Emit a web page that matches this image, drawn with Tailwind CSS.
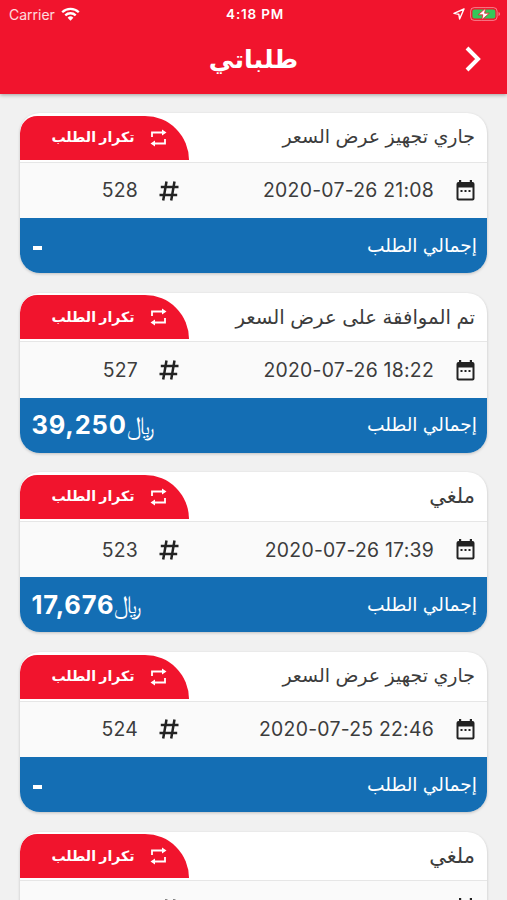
<!DOCTYPE html>
<html lang="ar" dir="rtl">

<head>
  <meta charset="UTF-8" />
  <meta name="viewport" content="width=device-width, initial-scale=1.0" />
  <title>طلباتي</title>
  <script src="https://cdn.jsdelivr.net/npm/@tailwindcss/browser@4"></script>
</head>

<body class="h-screen overflow-hidden bg-[#f1f1f1] font-['Inter','DejaVu_Sans',sans-serif] text-[#3c3c3c]">

  <!-- HEADER -->
  <header class="relative h-[94px] bg-[#f1142d] text-white shadow-[0_1px_4px_rgba(0,0,0,0.35)]">
    <div dir="ltr" class="grid h-7 grid-cols-3 items-center pl-[9px] pr-[6px] text-[13.5px]">
      <div class="flex items-center gap-[6px]">
        <span class="text-[14px] text-white/85">Carrier</span>
        <svg class="h-[14px] w-[19px]" viewBox="0 0 19 14" fill="none" stroke="currentColor" stroke-width="2.3">
          <path d="M1.2 5.2a11.8 11.8 0 0 1 16.6 0" />
          <path d="M4.3 8.4a7.4 7.4 0 0 1 10.4 0" />
          <path d="M6.6 10.8a4.1 4.1 0 0 1 5.8 0L9.5 13.7z" fill="currentColor" stroke="none" />
        </svg>
      </div>
      <span class="text-center font-semibold tracking-[0.8px] whitespace-nowrap">4:18 PM</span>
      <div class="flex items-center justify-end gap-[5px]">
        <svg class="h-3 w-3" viewBox="0 0 12 12" fill="none" stroke="currentColor" stroke-width="1.4" stroke-linejoin="round">
          <path d="M11 1L1 5.4l4.8.8.8 4.8z" />
        </svg>
        <svg class="h-[14px] w-[31px]" viewBox="0 0 31 14">
          <rect x=".6" y=".6" width="26.5" height="12.8" rx="3.6" fill="none" stroke="#fff" stroke-opacity=".45" />
          <rect x="2.4" y="2.4" width="23" height="9.2" rx="2" fill="#35c759" />
          <path d="M28.5 5v4q1.6-.6 1.6-2T28.5 5z" fill="#fff" fill-opacity=".45" />
          <path d="M15.6 1.2L8.2 7.8h4.6l-1 5 7.5-6.6h-4.7z" fill="#fff" stroke="#f1142d" stroke-width=".8" />
        </svg>
      </div>
    </div>
    <div class="grid h-[62px] grid-cols-[1fr_auto_1fr] items-center px-[25px]">
      <svg class="h-[26px] w-[18px]" viewBox="0 0 18 26" fill="none" stroke="currentColor" stroke-width="4">
        <path d="M3 2l11 11L3 24" />
      </svg>
      <h1 class="text-[25.4px] font-bold">طلباتي</h1>
    </div>
  </header>

  <!-- ORDERS LIST -->
  <main id="orders" class="flex flex-col gap-[19.6px] px-5 pt-[19.3px]"></main>

  <script>
    const orders = [
      { status: "جاري تجهيز عرض السعر", size: "text-[19px]", date: "2020-07-26 21:08", number: "528", total: null },
      { status: "تم الموافقة على عرض السعر", size: "text-[19.7px]", date: "2020-07-26 18:22", number: "527", total: "39,250" },
      { status: "ملغي", size: "text-[21px]", date: "2020-07-26 17:39", number: "523", total: "17,676" },
      { status: "جاري تجهيز عرض السعر", size: "text-[19px]", date: "2020-07-25 22:46", number: "524", total: null },
      { status: "ملغي", size: "text-[21px]", date: "2020-07-25 22:40", number: "522", total: null }
    ];

    const totalMarkup = (total) => total
      ? `<span dir="ltr" class="flex items-center"><b class="text-[25.5px] font-bold tracking-[0.8px]">${total}</b><span class="text-[25px] leading-none">﷼</span></span>`
      : `<span class="mt-[5px] ml-[1px] h-[4px] w-[9px] bg-white"></span>`;

    document.getElementById("orders").innerHTML = orders.map((order) => `
      <article class="h-[160px] w-[467.5px] shrink-0 overflow-hidden rounded-[20px] bg-white shadow-[0_1px_3px_rgba(0,0,0,0.2)]">
        <div class="flex h-[49.5px] justify-between border-b border-[#e6e6e6]">
          <h2 class="pr-3 pt-[9px] leading-[30px] ${order.size}">${order.status}</h2>
          <button class="mt-[2.5px] flex h-[44px] w-[169px] items-center gap-[15px] rounded-tl-[18px] rounded-tr-[46px] bg-[#f1142d] pr-[22px] text-white">
            <svg class="h-[18px] w-[17px]" viewBox="0 0 17 18" fill="none" stroke="currentColor" stroke-width="1.8">
              <path d="M2 8V3.5h11M15 10v4.5H4" />
              <path d="M12 .5l4.5 3-4.5 3zM5 11.5l-4.5 3 4.5 3z" fill="currentColor" stroke="none" />
            </svg>
            <span class="pb-[2px] text-[14.1px] font-bold">تكرار الطلب</span>
          </button>
        </div>
        <div class="flex h-[55.5px] items-center bg-[#fafafa] pr-[12px]">
          <svg class="h-[21px] w-[19px]" viewBox="0 0 19 21">
            <path d="M2.5 2h14a2 2 0 0 1 2 2v14.5a2 2 0 0 1-2 2h-14a2 2 0 0 1-2-2V4a2 2 0 0 1 2-2zM2.5 7.5v11h14v-11z" fill="#222" fill-rule="evenodd" />
            <path d="M3 0h2.2v3H3zM13.8 0H16v3h-2.2zM4.5 10h2v2h-2zM8.5 10h2v2h-2zM12.5 10h2v2h-2z" fill="#222" />
          </svg>
          <span dir="ltr" class="mr-[22px] w-[230px] pt-[1px] text-right text-[19.4px] tracking-[0.25px]">${order.date}</span>
          <svg class="mr-[25px] h-[20px] w-[20px]" viewBox="0 0 20 20" fill="none" stroke="#222" stroke-width="2.5">
            <path d="M7.5.5L4.2 19.5M15.5.5L12.2 19.5M1.8 6H19.5M.5 14H18.2" />
          </svg>
          <span dir="ltr" class="mr-[21px] pt-[1px] text-[19.4px] tracking-[0.25px]">${order.number}</span>
        </div>
        <div class="flex h-[55px] items-center justify-between bg-[#146eb4] pl-3 pr-[10px] text-white">
          <span class="text-[18.6px]">إجمالي الطلب</span>
          ${totalMarkup(order.total)}
        </div>
      </article>
    `).join("");
  </script>
</body>

</html>
